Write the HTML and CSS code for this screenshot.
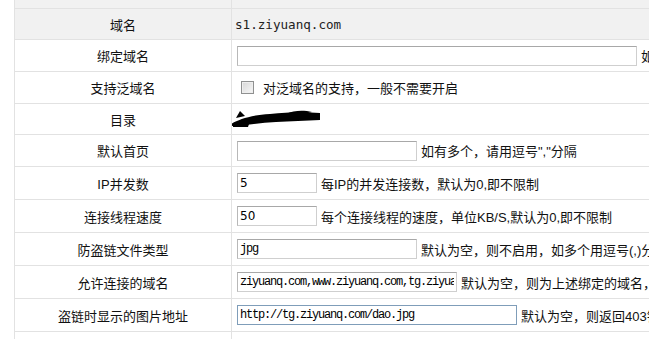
FILE: index.html
```html
<!DOCTYPE html>
<html lang="zh-CN">
<head>
    <meta charset="UTF-8">
    <title>站点设置</title>
    <link rel="stylesheet" href="styles.css">
</head>
<body>
    <table class="site-table">
        <colgroup>
            <col class="col-label">
            <col>
        </colgroup>
        <tr class="band"><td></td><td></td></tr>
        <tr class="gray short">
            <td class="label">域名</td>
            <td><span class="domain">s1.ziyuanq.com</span></td>
        </tr>
        <tr>
            <td class="label">绑定域名</td>
            <td><input type="text" class="inp w400"><span class="tip">如有多个，请用逗号","分隔</span></td>
        </tr>
        <tr>
            <td class="label">支持泛域名</td>
            <td><input type="checkbox" class="chk"><span class="chk-text">对泛域名的支持，一般不需要开启</span></td>
        </tr>
        <tr class="short">
            <td class="label">目录</td>
            <td>
                <svg class="scribble" width="92" height="18" viewBox="0 0 92 18">
                    <path d="M1 14 C 8 10, 20 5, 40 4 C 58 2, 75 2, 90 3 L 90 10 C 76 11, 60 11, 46 12 C 30 13, 15 15, 2 16 Z" fill="#000"/>
                    <path d="M6 8 L 10 1 L 15 6 Z" fill="#000"/>
                    <path d="M3 14 C 9 13, 15 13, 19 14 L 18 17 C 12 17, 7 17, 3 17 Z" fill="#000"/>
                    <path d="M56 4 C 64 0, 74 0, 82 2 L 70 5 Z" fill="#000"/>
                </svg>
            </td>
        </tr>
        <tr>
            <td class="label">默认首页</td>
            <td><input type="text" class="inp w180"><span class="tip">如有多个，请用逗号","分隔</span></td>
        </tr>
        <tr class="tall">
            <td class="label">IP并发数</td>
            <td><input type="text" class="inp w80 sans" value="5"><span class="tip">每IP的并发连接数，默认为0,即不限制</span></td>
        </tr>
        <tr class="tall">
            <td class="label">连接线程速度</td>
            <td><input type="text" class="inp w80 sans" value="50"><span class="tip">每个连接线程的速度，单位KB/S,默认为0,即不限制</span></td>
        </tr>
        <tr class="tall">
            <td class="label">防盗链文件类型</td>
            <td><input type="text" class="inp w180" value="jpg"><span class="tip">默认为空，则不启用，如多个用逗号(,)分隔</span></td>
        </tr>
        <tr class="tall">
            <td class="label">允许连接的域名</td>
            <td><input type="text" class="inp w220" value="ziyuanq.com,www.ziyuanq.com,tg.ziyuanq.com"><span class="tip">默认为空，则为上述绑定的域名，多个用逗号分隔</span></td>
        </tr>
        <tr class="tall">
            <td class="label">盗链时显示的图片地址</td>
            <td><input type="text" class="inp w280 focus" value="http://tg.ziyuanq.com/dao.jpg"><span class="tip">默认为空，则返回403错误</span></td>
        </tr>
        <tr>
            <td class="label"></td>
            <td></td>
        </tr>
    </table>
</body>
</html>
```

FILE: styles.css
```css
html, body {
    margin: 0;
    overflow: hidden;
    background: #fff;
}
.site-table {
    margin-left: 14px;
    width: 1000px;
    table-layout: fixed;
    border-collapse: collapse;
    font-family: "Liberation Sans", "Noto Sans CJK SC", sans-serif;
    font-size: 13px;
    color: #111;
}
.col-label {
    width: 217px;
}
.site-table td {
    border: 1px solid #e2e2e2;
    height: 31px;
    padding: 0 5px;
    white-space: nowrap;
    vertical-align: middle;
    overflow: hidden;
}
.site-table tr.band td {
    height: 8px;
    border-top: none;
    background: #f1f1f1;
}
.site-table tr.short td {
    height: 30px;
}
.site-table tr.tall td {
    height: 32px;
}
.site-table tr.gray td {
    background: #f1f1f1;
}
.label {
    text-align: center;
}
.domain {
    font-family: "DejaVu Sans Mono", monospace;
    font-size: 12.6px;
    color: #222;
    margin-left: -2px;
}
.inp {
    box-sizing: border-box;
    height: 20px;
    margin: 0;
    padding: 0 2px;
    vertical-align: middle;
    border: 1px solid #cfcfcf;
    border-top-color: #a8a8a8;
    border-left-color: #b8b8b8;
    font-family: "Liberation Mono", monospace;
    font-size: 12px;
    letter-spacing: -1.2px;
    color: #000;
    outline: none;
}
.inp.sans {
    font-family: "DejaVu Sans", sans-serif;
    letter-spacing: 0;
}
.inp.focus {
    border-color: #7f9db9;
}
.w80 { width: 80px; }
.w180 { width: 180px; }
.w220 { width: 220px; }
.w280 { width: 280px; }
.w400 { width: 400px; }
.tip {
    margin-left: 4px;
    vertical-align: middle;
}
.chk {
    appearance: none;
    -webkit-appearance: none;
    box-sizing: border-box;
    width: 13px;
    height: 13px;
    margin: 0 0 0 4px;
    vertical-align: middle;
    border: 1px solid #8f9090;
    background: linear-gradient(135deg, #d6d6d6, #f8f8f8);
    box-shadow: inset 0 0 0 1px #eeeeee;
}
.chk-text {
    margin-left: 9px;
    vertical-align: middle;
}
.scribble {
    display: block;
    margin-left: -7px;
}
```
